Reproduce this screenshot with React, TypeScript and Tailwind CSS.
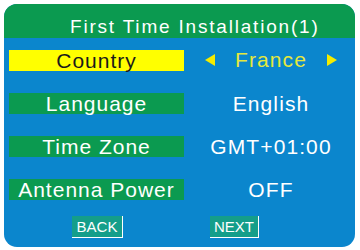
import React from 'react';

const rows = [
  { label: 'Country', value: 'France', active: true },
  { label: 'Language', value: 'English' },
  { label: 'Time Zone', value: 'GMT+01:00' },
  { label: 'Antenna Power', value: 'OFF' },
];

const Arrow = ({ dir }: { dir: 'left' | 'right' }) => (
  <svg width="10" height="12" viewBox="0 0 10 12" className="shrink-0">
    {dir === 'left' ? (
      <polygon points="10,0 10,12 0,6" fill="#f4ec00" />
    ) : (
      <polygon points="0,0 0,12 10,6" fill="#f4ec00" />
    )}
  </svg>
);

export default function App() {
  return (
    <div
      className="w-[360px] h-[250px] bg-white pt-[4px] pl-[4px] pr-[5px] pb-[3px]"
      style={{ fontFamily: '"Liberation Sans", Arial, sans-serif' }}
    >
      <div className="h-full rounded-[13px] overflow-hidden bg-[#0b86cd] flex flex-col">
        {/* header */}
        <div className="h-[34px] bg-[#0b9a50] pl-[66px] pt-[13px]">
          <div className="text-[19px] leading-[19px] tracking-[1.8px] text-white whitespace-nowrap">
            First Time Installation(1)
          </div>
        </div>

        {/* settings */}
        <div className="mt-[12px] pl-[5px] grid grid-cols-[175px_1fr] gap-y-[22px]">
          {rows.map((r) => (
            <React.Fragment key={r.label}>
              <div
                className={`h-[21px] flex justify-center text-[21px] leading-[21px] tracking-[1px] whitespace-nowrap ${
                  r.active ? 'bg-[#ffff00] text-[#1a1a1a]' : 'bg-[#0b9a50] text-white'
                }`}
              >
                {r.label}
              </div>
              <div className="h-[21px] pl-[3px] flex justify-center items-start text-[21px] leading-[21px] tracking-[1.1px] whitespace-nowrap">
                {r.active ? (
                  <div className="flex items-center gap-[20px] -mt-[1px]">
                    <Arrow dir="left" />
                    <span className="text-[#e6e83c]">{r.value}</span>
                    <Arrow dir="right" />
                  </div>
                ) : (
                  <span className="text-white">{r.value}</span>
                )}
              </div>
            </React.Fragment>
          ))}
        </div>

        {/* buttons */}
        <div className="mt-[16px] flex">
          <div className="ml-[68px] w-[51px] h-[22px] bg-[#149e8a] border-r border-b border-white flex items-center justify-center text-white text-[15px] leading-none">
            BACK
          </div>
          <div className="ml-[87px] w-[49px] h-[22px] bg-[#149e8a] border-r border-b border-white flex items-center justify-center text-white text-[15px] leading-none">
            NEXT
          </div>
        </div>
      </div>
    </div>
  );
}
